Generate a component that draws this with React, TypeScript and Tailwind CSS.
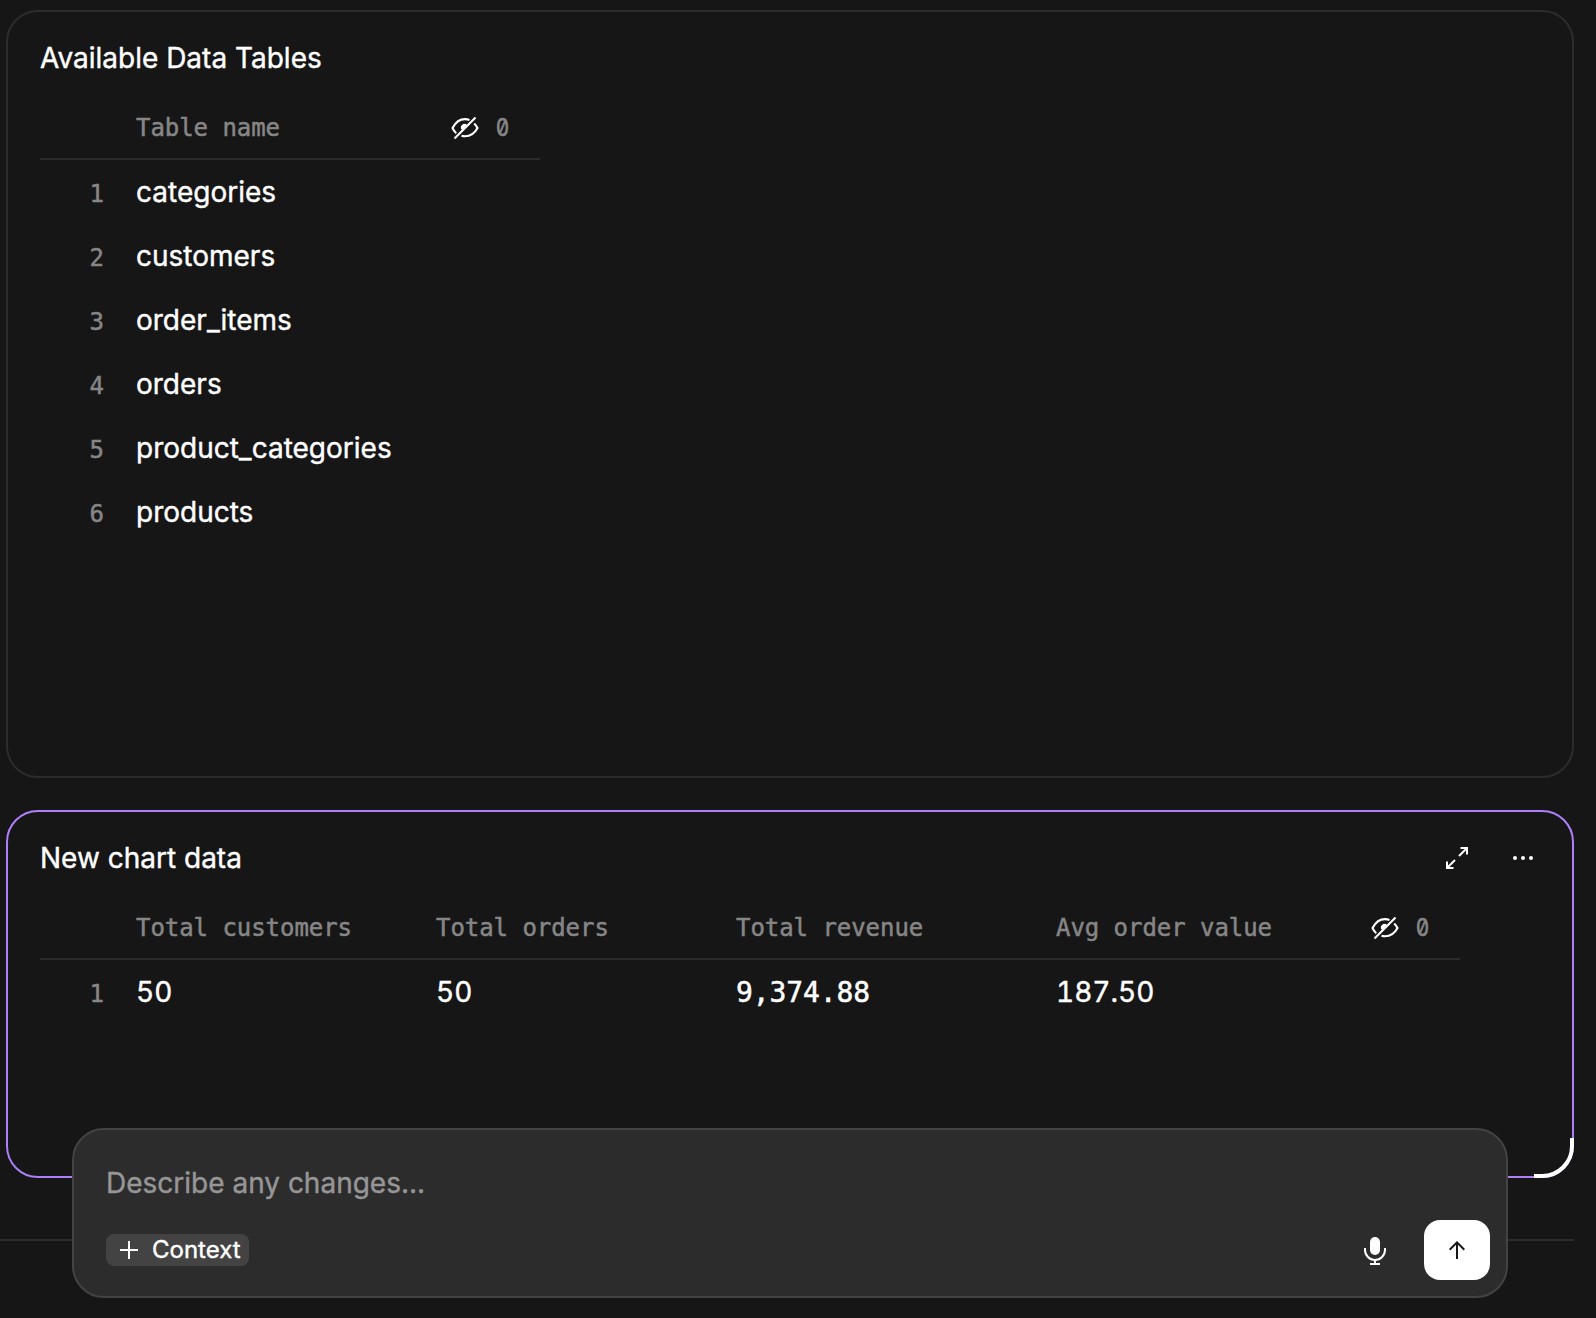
import React from "react";

const mono = "font-['DejaVu_Sans_Mono',monospace] font-normal [-webkit-text-stroke:0.5px_currentColor]";

function EyeOff() {
  return (
    <svg width="28" height="24" viewBox="0 0 28 24" fill="none" stroke="white" strokeWidth="2.1" className="shrink-0">
      <path d="M18.5 4.2C17.2 3.5 15.7 3.1 14 3.1C8.200 3.100 4.300 6.700 1.500 12C2.400 14 3.600 15.700 5.200 17.200" />
      <path d="M23.200 7.500C24.600 8.900 25.700 10.400 26.500 12C23.700 17.300 19.800 20.200 14 20.200C12.700 20.200 11.600 20 10.500 19.700" />
      <path d="M3.500 22.500L24.500 1.500" strokeWidth="2.2" />
      <path d="M11 14A3.500 3.500 0 0 1 16 9Z" fill="white" stroke="none" />
    </svg>
  );
}

function Hidden() {
  return (
    <div className="flex items-center gap-[16px]">
      <EyeOff />
      <span className="scale-x-[0.86] font-['Inter',sans-serif] slashed-zero [-webkit-text-stroke:0.7px_currentColor]">0</span>
    </div>
  );
}

const names = ["categories", "customers", "order_items", "orders", "product_categories", "products"];

function RowNumber({ n }: { n: number }) {
  return (
    <div className={"w-16 shrink-0 pt-[3px] text-right text-[24px] tracking-[-0.05px] text-[#868686] " + mono}>{n}</div>
  );
}

export default function App() {
  return (
    <div className="relative h-[1318px] w-[1596px] overflow-hidden bg-[#161616] pl-1.5 pt-2.5 font-['Inter',sans-serif] text-[28px] font-normal leading-[40px] text-white [-webkit-text-stroke:0.4px_currentColor]">
      <section className="h-[768px] w-[1568px] rounded-[32px] border-2 border-[#2c2c2c] px-8 pt-[26px]">
        <h2>Available Data Tables</h2>
        <div className={"mt-[18px] flex h-[64px] w-[500px] items-center border-b-2 border-[#2c2c2c] pl-24 pt-[2px] text-[24px] tracking-[-0.05px] text-[#868686] " + mono}>
          <div className="w-[315px]">Table name</div>
          <Hidden />
        </div>
        {names.map((n, i) => (
          <div key={n} className="flex h-16 items-center gap-8">
            <RowNumber n={i + 1} />
            <div>{n}</div>
          </div>
        ))}
      </section>

      <section className="relative mt-8 h-[368px] w-[1568px] rounded-[32px] border-2 border-[#ad7ff9] px-8 pt-[26px]">
        <div className="flex h-10 items-center justify-between">
          <h2>New chart data</h2>
          <div className="flex items-center gap-[43px] pr-[6px]">
            <svg width="24" height="24" viewBox="0 0 24 24" fill="none" stroke="white" strokeWidth="2">
              <path d="M14 10L22 2M15.500 2H22V8.500M10 14L2 22M2 15.500V22H8.500" />
            </svg>
            <svg width="22" height="6" viewBox="0 0 22 6" fill="white">
              <circle cx="3" cy="3" r="2" />
              <circle cx="11" cy="3" r="2" />
              <circle cx="19" cy="3" r="2" />
            </svg>
          </div>
        </div>
        <div className={"mt-[18px] flex h-[64px] w-[1420px] items-center border-b-2 border-[#2c2c2c] pl-24 pt-[2px] text-[24px] tracking-[-0.05px] text-[#868686] " + mono}>
          <div className="w-[300px]">Total customers</div>
          <div className="w-[300px]">Total orders</div>
          <div className="w-[320px]">Total revenue</div>
          <div className="w-[315px]">Avg order value</div>
          <Hidden />
        </div>
        <div className="flex h-16 items-center">
          <RowNumber n={1} />
          <div className="ml-8 w-[300px] tabular-nums">50</div>
          <div className="w-[300px] tabular-nums">50</div>
          <div className={"w-[320px] pt-px tracking-[-0.1px] " + mono}>9,374.88</div>
          <div className="tabular-nums">187.50</div>
        </div>
        <svg className="absolute -bottom-0.5 -right-0.5" width="40" height="40" viewBox="0 0 40 40" fill="none" stroke="white" strokeWidth="4">
          <path d="M38 0V8A30 30 0 0 1 8 38H0" />
        </svg>
      </section>

      <hr className="-ml-1.5 mt-[61px] w-[1574px] border-t-2 border-[#2c2c2c]" />

      <div className="absolute left-[72px] top-[1128px] h-[170px] w-[1436px] rounded-[32px] border-2 border-[#434343] bg-[#2c2c2c] px-8 pt-[33px]">
        <div className="text-[#969696]">Describe any changes...</div>
        <div className="-mr-4 mt-[17px] flex h-[60px] items-center">
          <button className="flex h-8 w-[143px] items-center gap-[14px] rounded-lg bg-[#434343] pl-[14px] text-[24px] leading-8">
            <svg width="18" height="18" viewBox="0 0 18 18" stroke="white" strokeWidth="2">
              <path d="M9 0V18M0 9H18" />
            </svg>
            Context
          </button>
          <svg className="ml-auto mr-[38px] mt-[2px]" width="22" height="28" viewBox="0 0 22 28" fill="none" stroke="white" strokeWidth="2">
            <rect x="6" y="0" width="10" height="18" rx="5" fill="white" stroke="none" />
            <path d="M1 11V13A10 10 0 0 0 21 13V11M11 23V27M6 27H16" />
          </svg>
          <button className="flex h-[60px] w-[66px] items-center justify-center rounded-[16px] bg-white">
            <svg width="16" height="18" viewBox="0 0 16 18" fill="none" stroke="#161616" strokeWidth="2">
              <path d="M8 18V1.500M0.700 8.700L8 1.400L15.300 8.700" />
            </svg>
          </button>
        </div>
      </div>
    </div>
  );
}
